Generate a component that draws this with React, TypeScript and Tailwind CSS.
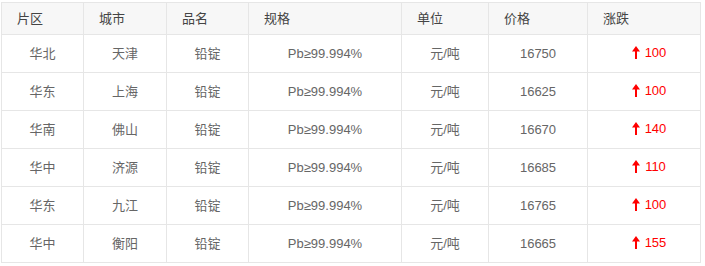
import React from "react";

const rows = [
  ["华北", "天津", "铅锭", "Pb≥99.994%", "元/吨", "16750", "100"],
  ["华东", "上海", "铅锭", "Pb≥99.994%", "元/吨", "16625", "100"],
  ["华南", "佛山", "铅锭", "Pb≥99.994%", "元/吨", "16670", "140"],
  ["华中", "济源", "铅锭", "Pb≥99.994%", "元/吨", "16685", "110"],
  ["华东", "九江", "铅锭", "Pb≥99.994%", "元/吨", "16765", "100"],
  ["华中", "衡阳", "铅锭", "Pb≥99.994%", "元/吨", "16665", "155"],
];

const headers = ["片区", "城市", "品名", "规格", "单位", "价格", "涨跌"];
const widths = ["w-[82px]", "w-[83px]", "w-[82px]", "w-[153px]", "w-[87px]", "w-[99px]", "w-[113px]"];

function Arrow() {
  return (
    <svg width="8" height="13" viewBox="0 0 8 13" className="inline-block">
      <path d="M4 0 L8 5.5 L5 5.5 L5 13 L3 13 L3 5.5 L0 5.5 Z" fill="#ff0000" />
    </svg>
  );
}

export default function App() {
  return (
    <div
      className="pt-[2px] pl-[1px] bg-white w-[705px] h-[266px]"
      style={{ fontFamily: '"Liberation Sans", Arial, "Noto Sans CJK SC", sans-serif' }}
    >
      <table className="table-fixed border-collapse w-[700px] text-[13px]">
        <colgroup>
          {widths.map((w, i) => (
            <col key={i} className={w} />
          ))}
        </colgroup>
        <thead>
          <tr className="h-[32px] bg-[#f7f7f7]">
            {headers.map((h) => (
              <th
                key={h}
                className="border border-[#e6e6e6] text-left font-normal pl-[15px] text-[#444] p-0"
              >
                {h}
              </th>
            ))}
          </tr>
        </thead>
        <tbody>
          {rows.map((r, i) => (
            <tr key={i} className="h-[38px]">
              {r.slice(0, 6).map((c, j) => (
                <td key={j} className="border border-[#e6e6e6] text-center text-[#666] p-0">
                  {c}
                </td>
              ))}
              <td className="border border-[#e6e6e6] text-center p-0 text-[#ff0000]">
                <span className="inline-flex items-center gap-[5px] pl-[10px]">
                  <Arrow />
                  <span>{r[6]}</span>
                </span>
              </td>
            </tr>
          ))}
        </tbody>
      </table>
    </div>
  );
}
